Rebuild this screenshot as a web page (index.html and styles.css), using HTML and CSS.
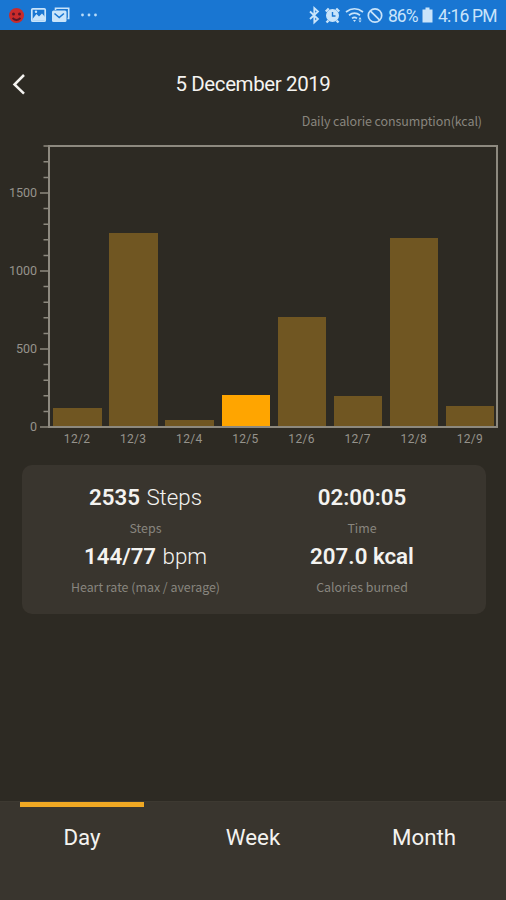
FILE: index.html
```
<!DOCTYPE html>
<html lang="en">
<head>
    <meta charset="UTF-8">
    <meta name="viewport" content="width=device-width, initial-scale=1.0">
    <title>Daily activity</title>
    <link rel="stylesheet" href="styles.css">
</head>
<body>
    <div id="status-bar">
        <svg class="status-icons" width="100" height="30" viewBox="0 0 100 30">
            <circle cx="16.500" cy="15.500" r="7.500" fill="#c92b2b"/>
            <circle cx="13.500" cy="14" r="1.500" fill="#5b1628"/>
            <circle cx="19.500" cy="14" r="1.500" fill="#5b1628"/>
            <path d="M12.500 18q4 4 8 0" fill="none" stroke="#5b1628" stroke-width="1.800"/>
            <rect x="31.800" y="8.800" width="13.400" height="12.400" rx="1" fill="none" stroke="#c9e4fa" stroke-width="1.700"/>
            <path d="M32.500 19l4-5 2.500 2.500 3-3 3 3.500v3.500h-12.500z" fill="#c9e4fa"/>
            <circle cx="36" cy="11.800" r="1.200" fill="#c9e4fa"/>
            <path d="M55.500 10V8.300h13.200v10.200H67.500" fill="none" stroke="#c9e4fa" stroke-width="1.600"/>
            <rect x="52" y="10.500" width="14.500" height="11.500" rx="1.500" fill="#c9e4fa"/>
            <path d="M54.500 13.500l4.700 4 4.700-4" fill="none" stroke="#1976d2" stroke-width="1.600"/>
            <circle cx="82.500" cy="15" r="1.400" fill="#b9dcf8"/>
            <circle cx="89" cy="15" r="1.400" fill="#b9dcf8"/>
            <circle cx="95.500" cy="15" r="1.400" fill="#b9dcf8"/>
        </svg>
        <div class="status-right">
            <svg width="78" height="30" viewBox="306 0 78 30" fill="none" stroke="#c9e4fa">
                <path d="M310 11.500l8 7.500-3.700 3.500V8l3.700 3.500-8 7.500" stroke-width="1.800"/>
                <circle cx="332.500" cy="15.500" r="5.800" fill="#c9e4fa" stroke-width="1.400"/>
                <path d="M325.800 11.500l3-3M339.200 11.500l-3-3M328.500 20.500l-2 2M336.500 20.500l2 2" stroke-width="2.400"/>
                <path d="M332.500 12v4h3" stroke="#1976d2" stroke-width="1.400"/>
                <path d="M346 12q8.500-6.500 17 0M349 15.200q5.500-4.200 11 0M352 18.300q2.500-2 5 0" stroke-width="1.700"/>
                <path d="M353 20h3l-1.500 2zM358.500 19.500l1.500-2.500 1.500 2.500zM358.500 20.500l1.500 2 1.500-2z" fill="#c9e4fa" stroke="none"/>
                <circle cx="375" cy="15.500" r="6.700" stroke-width="1.700"/>
                <path d="M370.300 10.800l9.400 9.400" stroke-width="1.700"/>
            </svg>
            <span class="battery-text">86%</span>
            <svg width="11" height="30" viewBox="0 0 11 30">
                <path d="M3.500 7.500h4v2h3v13h-10v-13h3z" fill="#c9e4fa"/>
            </svg>
            <span class="clock">4:16 PM</span>
        </div>
    </div>

    <div id="header">
        <svg class="back" width="16" height="24" viewBox="0 0 16 24">
            <path d="M14 3L4.500 12.500l9.500 9.200" fill="none" stroke="#f4f3f0" stroke-width="2.500"/>
        </svg>
        <div class="date">5 December 2019</div>
    </div>

    <div id="chart-title"><span>Daily calorie consumption(kcal)</span></div>

    <!-- Chart -->
    <div id="chart">
        <div class="y-labels">
            <span>1500</span>
            <span>1000</span>
            <span>500</span>
            <span>0</span>
        </div>
        <svg class="ticks" width="8" height="283" viewBox="0 0 8 283">
            <path d="M0 48h8M0 126h8M0 204h8M0 282h8" stroke="#8d897f" stroke-width="1.700"/>
            <path d="M3.500 1h5M3.500 16.800h5M3.500 32.400h5M3.500 63.600h5M3.500 79.200h5M3.500 94.800h5M3.500 110.400h5M3.500 141.600h5M3.500 157.200h5M3.500 172.800h5M3.500 188.400h5M3.500 219.600h5M3.500 235.200h5M3.500 250.800h5M3.500 266.400h5" stroke="#8d897f" stroke-width="1.500"/>
        </svg>
        <div class="plot">
            <div class="bar" style="height: 18px"></div>
            <div class="bar" style="height: 193px"></div>
            <div class="bar" style="height: 6px"></div>
            <div class="bar active" style="height: 31px"></div>
            <div class="bar" style="height: 109px"></div>
            <div class="bar" style="height: 30px"></div>
            <div class="bar" style="height: 188px"></div>
            <div class="bar" style="height: 20px"></div>
        </div>
    </div>
    <div class="x-labels">
        <span>12/2</span>
        <span>12/3</span>
        <span>12/4</span>
        <span>12/5</span>
        <span>12/6</span>
        <span>12/7</span>
        <span>12/8</span>
        <span>12/9</span>
    </div>

    <!-- Summary -->
    <div id="summary">
        <div class="stat">
            <div class="value"><b>2535</b> Steps</div>
            <div class="label">Steps</div>
        </div>
        <div class="stat">
            <div class="value"><b>02:00:05</b></div>
            <div class="label">Time</div>
        </div>
        <div class="stat">
            <div class="value"><b>144/77</b> bpm</div>
            <div class="label">Heart rate (max / average)</div>
        </div>
        <div class="stat">
            <div class="value"><b>207.0 kcal</b></div>
            <div class="label">Calories burned</div>
        </div>
    </div>

    <!-- Tabs -->
    <div id="tabs">
        <div class="tab active">Day</div>
        <div class="tab">Week</div>
        <div class="tab">Month</div>
    </div>
</body>
</html>
```
FILE: styles.css
```
* {
    box-sizing: border-box;
}
body {
    background-color: #2d2a23;
    font-family: Roboto, sans-serif;
    color: #f4f3f0;
    margin: 0;
    width: 506px;
    height: 900px;
    display: flex;
    flex-direction: column;
    overflow: hidden;
}
#status-bar {
    height: 30px;
    background-color: #1976d2;
    display: flex;
    justify-content: space-between;
    padding-right: 9px;
    color: #c9e4fa;
    font-size: 17.5px;
    line-height: 33px;
    flex-shrink: 0;
}
.status-right {
    display: flex;
}
.battery-text {
    width: 30px;
    margin-left: 4px;
    margin-right: 4px;
    letter-spacing: -1px;
}
.clock {
    margin-left: 5px;
    width: 59px;
    white-space: nowrap;
    letter-spacing: -0.8px;
}
#header {
    height: 60px;
    margin-top: 24px;
    padding: 18px 10px 0;
    display: flex;
    align-items: flex-start;
}
.back {
    flex-shrink: 0;
}
.date {
    flex: 1;
    margin-right: 16px;
    text-align: center;
    font-size: 20.5px;
    line-height: 24px;
    letter-spacing: -0.4px;
}
#chart-title {
    height: 31px;
    padding-right: 24px;
    text-align: right;
    font-family: "Noto Sans CJK KR", sans-serif;
    font-size: 12.5px;
    line-height: 14px;
    letter-spacing: -0.1px;
    color: #88857e;
}
#chart {
    height: 283px;
    display: flex;
    flex-shrink: 0;
}
.y-labels {
    width: 37px;
    height: 321px;
    margin-right: 3px;
    padding-top: 9px;
    text-align: right;
    font-size: 12.5px;
    color: #96938c;
}
.y-labels span {
    display: block;
    height: 78px;
    line-height: 78px;
}
.ticks {
    flex-shrink: 0;
}
.plot {
    width: 450px;
    border: 2px solid #8d897f;
    display: flex;
    align-items: flex-end;
    padding-left: 3.3px;
    gap: 7.6px;
}
.bar {
    width: 48.5px;
    flex-shrink: 0;
    background-color: #705622;
}
.bar.active {
    background-color: #ffa500;
}
.x-labels {
    height: 37px;
    margin-left: 49px;
    width: 449px;
    display: flex;
    flex-shrink: 0;
    font-size: 12px;
    line-height: 23px;
    letter-spacing: 0.3px;
    color: #96938c;
}
.x-labels span {
    flex: 1;
    text-align: center;
}
#summary {
    height: 149px;
    margin: 0 20px 0 22px;
    padding: 18px 24px 0 7px;
    background-color: #39352e;
    border-radius: 10px;
    display: grid;
    grid-template-columns: 233px 1fr;
    grid-auto-rows: 59px;
    flex-shrink: 0;
    text-align: center;
}
.value {
    height: 30px;
    font-size: 22.3px;
    line-height: 28px;
    font-weight: 300;
    word-spacing: 1px;
}
.value b {
    font-weight: 600;
    word-spacing: 0;
}
.label {
    font-family: "Noto Sans CJK KR", sans-serif;
    font-size: 12.4px;
    line-height: 30px;
    color: #88857e;
}
#tabs {
    height: 99px;
    margin-top: auto;
    padding: 0 20px;
    background-color: #39352e;
    border-top: 1px solid #3d3931;
    display: flex;
    justify-content: space-between;
    flex-shrink: 0;
}
.tab {
    width: 124px;
    padding-top: 18px;
    border-top: 5px solid transparent;
    text-align: center;
    font-size: 22.3px;
    line-height: 24px;
}
.tab.active {
    border-color: #f0a823;
}
```
